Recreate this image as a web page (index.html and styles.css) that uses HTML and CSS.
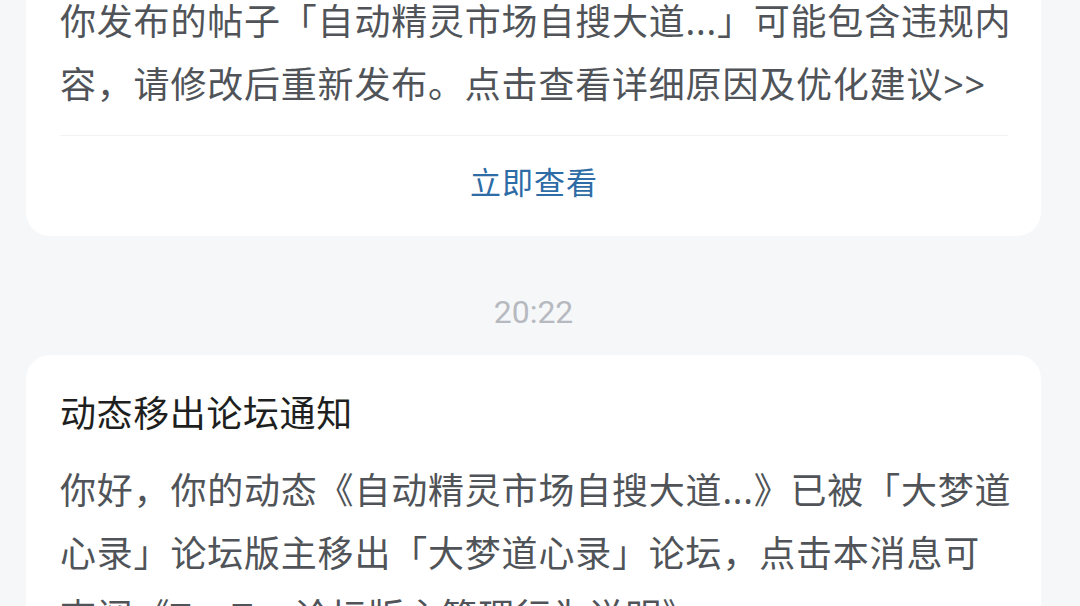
FILE: index.html
```html
<!DOCTYPE html>
<html>
<head>
    <meta charset="utf-8">
    <title>消息通知</title>
    <link rel="stylesheet" href="styles.css">
</head>
<body>
<div class="feed">
    <div class="card card-cut">
        <p class="msg">你发布的帖子「自动精灵市场自搜大道...」可能包含违规内容，请修改后重新发布。点击查看详细原因及优化建议&gt;&gt;</p>
        <div class="divider"></div>
        <a href="javascript:;" class="action">立即查看</a>
    </div>
    <div class="time">20:22</div>
    <div class="card">
        <h2 class="title">动态移出论坛通知</h2>
        <p class="msg">你好，你的动态《自动精灵市场自搜大道...》已被「大梦道心录」论坛版主移出「大梦道心录」论坛，点击本消息可<br>查阅《TapTap论坛版主管理行为说明》</p>
    </div>
</div>
</body>
</html>
```

FILE: styles.css
```css
*{margin:0;padding:0;box-sizing:border-box;}
html,body{background:#f6f7f9;}
body{font-family:"Noto Sans","Noto Sans CJK SC",sans-serif;overflow:hidden;height:606px;}
.feed{margin-top:-10px;padding:0 39px 0 26px;}
.card{background:#fff;border-radius:24px;padding:34px 23px 0 34px;}
.card-cut{border-radius:0 0 24px 24px;padding-top:0;}
.msg{font-size:36px;line-height:63px;letter-spacing:0.8px;color:#505459;}
.card-cut .msg{margin-bottom:19px;}
.divider{height:1px;margin-right:10px;background:#f1f2f4;}
.action{display:flex;align-items:center;justify-content:center;height:100px;padding:0 10px 12px 0;font-size:31px;letter-spacing:1px;color:#2e6ca6;text-decoration:none;}
.time{padding:56px 0 23px;font-size:32px;line-height:40px;text-align:center;color:#b6bac0;font-family:Roboto,"Noto Sans",sans-serif;}
.title{font-size:36px;line-height:50px;font-weight:normal;letter-spacing:0.6px;color:#1e1f21;}
.card .title + .msg{margin-top:20px;}
```
